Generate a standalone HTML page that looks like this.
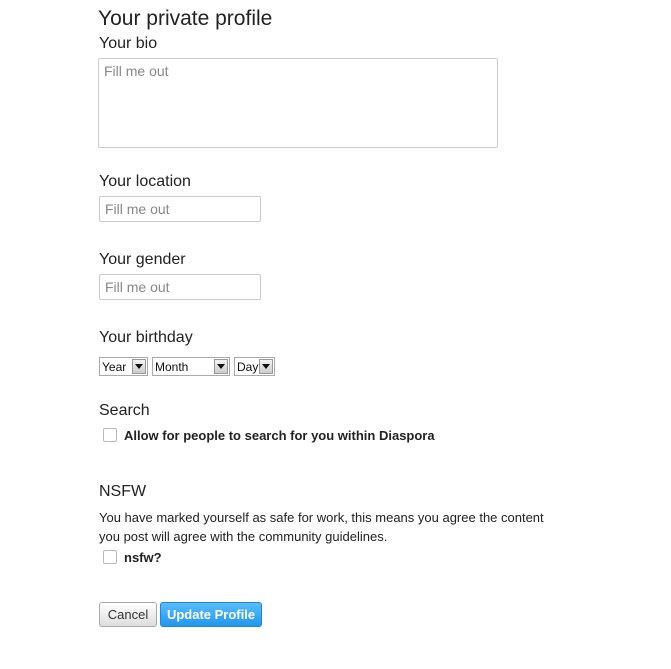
<!DOCTYPE html>
<html><head><meta charset="utf-8"><style>
body{margin:0;background:#fff;font-family:"Liberation Sans",sans-serif;color:#222;width:671px;height:669px;position:relative;overflow:hidden}
.a{position:absolute}
h1{position:absolute;margin:0;font-weight:normal;font-size:21px;left:98px;top:7px;color:#222}
.lbl{position:absolute;font-size:16px;left:99px;color:#222}
.inp{position:absolute;border:1px solid #ccc;border-radius:2px;background:#fff;color:#888;font-size:14px;box-sizing:border-box;padding:4px 5px}
.sel{position:absolute;top:357px;height:19px;border:1px solid #aaa;background:#fff;font-size:12px;box-sizing:border-box;padding:2px 2px;color:#111}
.sel i{position:absolute;right:1px;top:1px;width:14px;height:15px;background:linear-gradient(#f4f4f4,#ccc);border:1px solid #999;box-sizing:border-box}
.sel i:after{content:"";position:absolute;left:2px;top:4px;border:4px solid transparent;border-top:5px solid #111}
.cb{position:absolute;width:12px;height:12px;border:1px solid #bbb;border-radius:2px;background:#fff}
.btn{position:absolute;top:602px;height:25px;border-radius:3px;font-size:13px;box-sizing:border-box;text-align:center;line-height:23px}
</style></head><body>
<h1>Your private profile</h1>
<div class="lbl" style="top:35px">Your bio</div>
<div class="inp" style="left:98px;top:58px;width:400px;height:90px">Fill me out</div>
<div class="lbl" style="top:173px">Your location</div>
<div class="inp" style="left:99px;top:196px;width:162px;height:26px">Fill me out</div>
<div class="lbl" style="top:251px">Your gender</div>
<div class="inp" style="left:99px;top:274px;width:162px;height:26px">Fill me out</div>
<div class="lbl" style="top:329px">Your birthday</div>
<div class="sel" style="left:99px;width:49px">Year<i></i></div>
<div class="sel" style="left:152px;width:78px">Month<i></i></div>
<div class="sel" style="left:234px;width:41px">Day<i></i></div>
<div class="lbl" style="top:402px">Search</div>
<div class="cb" style="left:103px;top:428px"></div>
<div class="a" style="left:124px;top:428px;font-size:13px;font-weight:bold">Allow for people to search for you within Diaspora</div>
<div class="lbl" style="top:483px">NSFW</div>
<div class="a" style="left:99px;top:508px;font-size:13px;line-height:19px;width:500px">You have marked yourself as safe for work, this means you agree the content<br>you post will agree with the community guidelines.</div>
<div class="cb" style="left:103px;top:550px"></div>
<div class="a" style="left:124px;top:550px;font-size:13px;font-weight:bold">nsfw?</div>
<div class="btn" style="left:99px;width:58px;border:1px solid #aaa;background:linear-gradient(#fff,#ddd);color:#333">Cancel</div>
<div class="btn" style="left:160px;width:102px;border:1px solid #1a8ad8;background:linear-gradient(#5bbcf9,#2196ee);color:#fff;font-weight:bold">Update Profile</div>
</body></html>
